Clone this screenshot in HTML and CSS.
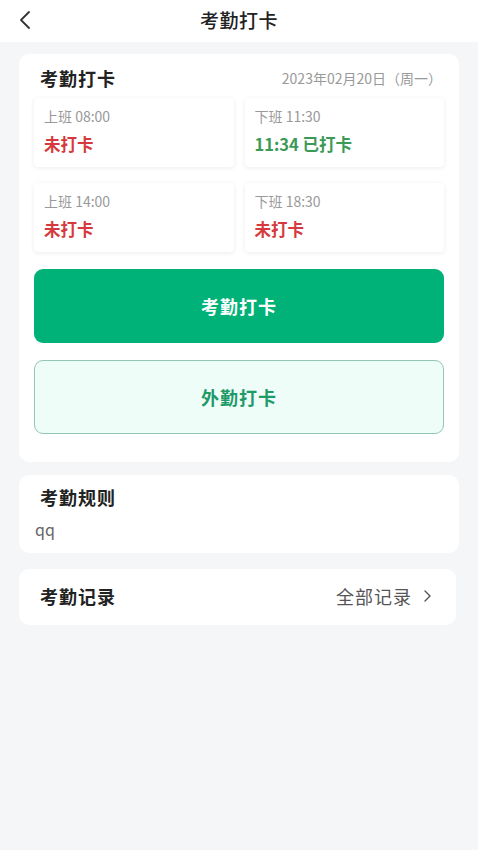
FILE: index.html
```html
<!DOCTYPE html>
<html lang="zh">
<head>
<meta charset="utf-8">
<title>考勤打卡</title>
<link rel="stylesheet" href="styles.css">
</head>
<body>
<header class="topbar">
  <span class="back"><svg width="14" height="20" viewBox="0 0 14 20"><path d="M11 2 L3 10 L11 18" fill="none" stroke="#333" stroke-width="1.8" stroke-linecap="round" stroke-linejoin="round"/></svg></span>
  <h1 class="topbar-title">考勤打卡</h1>
</header>
<main class="main">
  <section class="card punch-card">
    <div class="card-head">
      <span class="card-title">考勤打卡</span>
      <span class="date">2023年02月20日（周一）</span>
    </div>
    <div class="slots">
      <div class="slot"><div class="slot-label">上班 08:00</div><div class="slot-status miss">未打卡</div></div>
      <div class="slot"><div class="slot-label">下班 11:30</div><div class="slot-status done">11:34 已打卡</div></div>
      <div class="slot"><div class="slot-label">上班 14:00</div><div class="slot-status miss">未打卡</div></div>
      <div class="slot"><div class="slot-label">下班 18:30</div><div class="slot-status miss">未打卡</div></div>
    </div>
    <button class="btn btn-primary">考勤打卡</button>
    <button class="btn btn-outline">外勤打卡</button>
  </section>
  <section class="card rule-card">
    <div class="card-title rule-title">考勤规则</div>
    <div class="rule-text">qq</div>
  </section>
  <section class="card record-card">
    <span class="card-title">考勤记录</span>
    <span class="record-link">全部记录<svg width="10" height="14" viewBox="0 0 10 14"><path d="M3 2 L8 7 L3 12" fill="none" stroke="#555" stroke-width="1.4" stroke-linecap="round" stroke-linejoin="round"/></svg></span>
  </section>
</main>
</body>
</html>
```
FILE: styles.css
```css
* { box-sizing: border-box; }
html, body { margin: 0; padding: 0; }
body {
  background: #f5f6f8;
  font-family: "Noto Sans CJK SC", "Noto Sans", sans-serif;
  color: #222;
  width: 478px;
  min-height: 850px;
}
.topbar {
  height: 42px;
  padding-bottom: 4px;
  background: #fff;
  display: flex;
  align-items: center;
  justify-content: center;
  position: relative;
}
.back {
  position: absolute;
  left: 18px;
  top: 10px;
  display: flex;
}
.topbar-title {
  margin: 0;
  font-size: 19px;
  letter-spacing: 0.5px;
  font-weight: 500;
  color: #222;
}
.main {
  padding: 12px 19px;
  display: flex;
  flex-direction: column;
}
.card {
  background: #fff;
  border-radius: 10px;
}
.punch-card {
  padding: 10px 15px 28px;
  display: flex;
  flex-direction: column;
}
.card-head {
  height: 28px;
  display: flex;
  align-items: center;
  justify-content: space-between;
  padding: 0 2px 0 6px;
  margin-bottom: 6px;
}
.card-title {
  font-size: 18px;
  letter-spacing: 1px;
  font-weight: 700;
  color: #222;
}
.date {
  font-size: 14px;
  color: #999;
}
.slots {
  display: grid;
  grid-template-columns: 1fr 1fr;
  column-gap: 11px;
  row-gap: 16px;
}
.slot {
  height: 69px;
  padding: 8px 10px 0;
  background: #fff;
  border-radius: 4px;
  box-shadow: 0 1px 5px rgba(0,0,0,0.08);
}
.slot-label {
  font-size: 14px;
  line-height: 20px;
  color: #999;
}
.slot-status {
  margin-top: 7px;
  font-size: 16.5px;
  line-height: 22px;
  font-weight: 700;
}
.miss { color: #d6393d; }
.done { color: #3b9a56; }
.btn {
  height: 74px;
  border-radius: 9px;
  font-family: inherit;
  font-size: 18px;
  letter-spacing: 1px;
  font-weight: 700;
  cursor: pointer;
}
.btn-primary {
  margin-top: 17px;
  background: #00b277;
  color: #fff;
  border: none;
}
.btn-outline {
  margin-top: 17px;
  background: #effdf9;
  color: #1f9a69;
  border: 1px solid #92c7b2;
}
.rule-card {
  margin-top: 13px;
  height: 78px;
  padding: 10px 16px 0;
}
.rule-title {
  padding-left: 5px;
  line-height: 24px;
}
.rule-text {
  margin-top: 10px;
  font-size: 16px;
  color: #666;
  line-height: 20px;
}
.record-card {
  margin-top: 16px;
  margin-right: 3px;
  height: 56px;
  padding: 0 24px 2px 21px;
  display: flex;
  align-items: center;
  justify-content: space-between;
}
.record-link {
  font-size: 18px;
  letter-spacing: 1px;
  color: #555;
  display: flex;
  align-items: center;
  gap: 10px;
}
```
